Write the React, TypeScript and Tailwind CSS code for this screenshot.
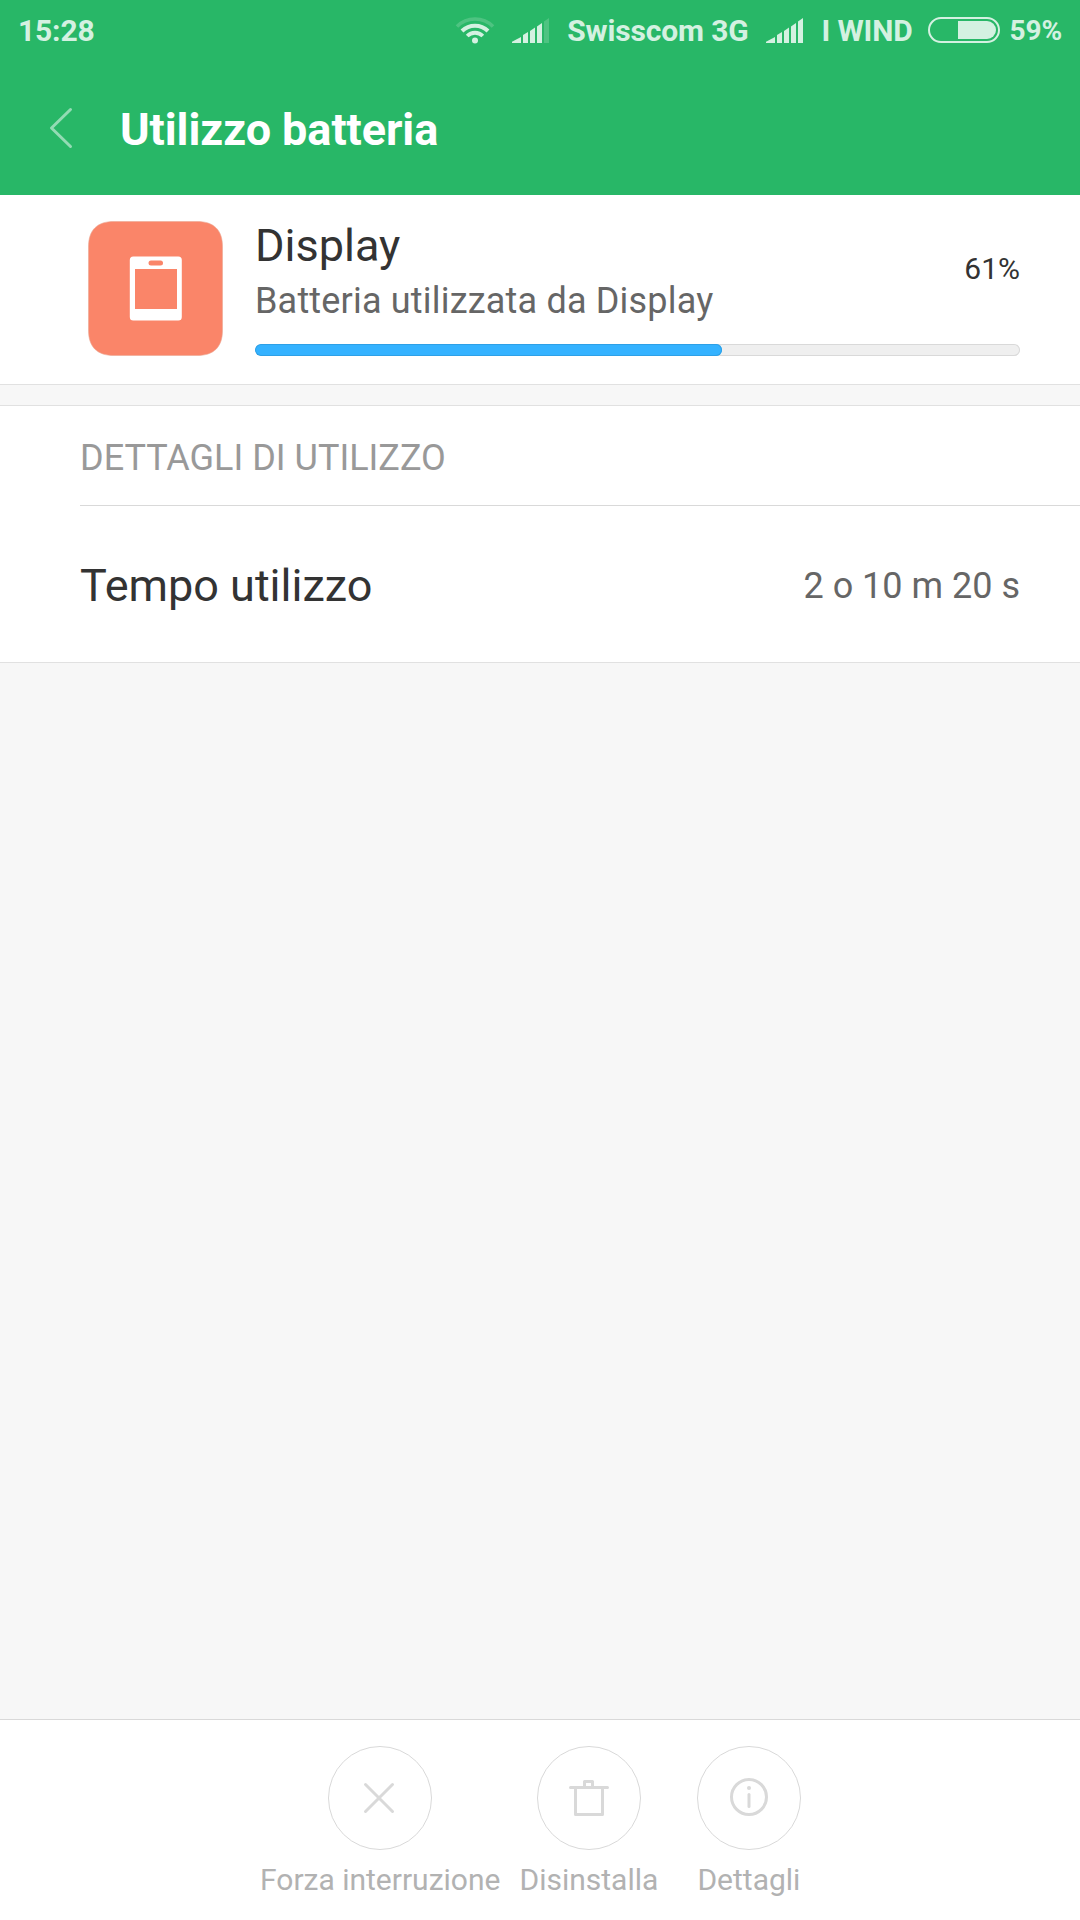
import { FC, ReactNode } from "react";

const usage = {
	name: "Display",
	summary: "Batteria utilizzata da Display",
	percent: 61
};

const details = [["Tempo utilizzo", "2 o 10 m 20 s"]];

const WifiIcon: FC = () => (
	<svg width={40} height={28} viewBox="0 0 40 28" fill="none" stroke="#d4f1e1" strokeWidth={4}>
		<path d="M2 9.5a25.5 25.5 0 0 1 36 0" strokeWidth={3.6} opacity={0.22} />
		<path d="M7 14a18.5 18.5 0 0 1 26 0" />
		<path d="M12.2 19a11 11 0 0 1 15.6 0" strokeWidth={3.8} />
		<circle cx={20} cy={23.5} r={3} fill="#d4f1e1" stroke="none" />
	</svg>
);

const SignalIcon: FC<{ full?: boolean }> = ({ full }) => (
	<svg width={38} height={26} viewBox="0 0 38 26" fill="#d4f1e1">
		<path d="M0 25v-1.2L9 19v6z" />
		<path d="M11 25v-8l5-3v11z" />
		<path d="M18 25V13l5-3.500V25z" />
		<path d="M25 25V8.500L30 5v20z" />
		<path d="M32 25V3.500L37 0v25z" opacity={full ? 1 : 0.22} />
	</svg>
);

const BatteryIcon: FC = () => (
	<svg width={72} height={26} viewBox="0 0 72 26" fill="none">
		<rect x={1} y={1} width={70} height={24} rx={12} stroke="#d4f1e1" strokeWidth={2} />
		<path d="M30 4h29a9 9 0 0 1 0 18H30z" fill="#d4f1e1" />
	</svg>
);

const StatusBar: FC = () => (
	<div className="flex h-[62px] items-center pr-[18px] pl-[18px] text-[30px] leading-none font-bold tracking-[-0.15px] text-[#d4f1e1]">
		<span className="grow">15:28</span>
		<WifiIcon />
		<div className="ml-[17px]">
			<SignalIcon />
		</div>
		<span className="ml-[17px]">Swisscom 3G</span>
		<div className="ml-[17px]">
			<SignalIcon full />
		</div>
		<span className="ml-[18px]">I WIND</span>
		<div className="mb-[2px] ml-[15px]">
			<BatteryIcon />
		</div>
		<span className="ml-[10px] text-[28px]">59%</span>
	</div>
);

const Header: FC = () => (
	<header className="h-[195px] bg-[#28b767]">
		<StatusBar />
		<div className="flex h-[135px] items-center pl-[49px]">
			<svg
				className="mb-[4px]"
				width={24}
				height={42}
				viewBox="0 0 24 42"
				fill="none"
				stroke="#93dbb4"
				strokeWidth={3}
				strokeLinecap="round"
				strokeLinejoin="round"
			>
				<path d="M21.500 2.500 2.500 21l19 18.500" />
			</svg>
			<h1 className="ml-[47px] text-[45px] leading-none font-bold tracking-[-0.06px] text-white">
				Utilizzo batteria
			</h1>
		</div>
	</header>
);

const DisplayIcon: FC = () => (
	<svg width={135} height={135} viewBox="0 0 135 135">
		<path
			d="M26 .5h83C126 .5 134.500 9 134.500 26v83c0 17-8.500 25.500-25.500 25.500H26C9 134.500.5 126 .5 109V26C.5 9 9 .5 26 .5z"
			fill="#fa8569"
			stroke="#eba893"
			strokeWidth={0.6}
		/>
		<rect x={41.800} y={35.500} width={52} height={64} rx={3.500} fill="#fff" />
		<rect x={47} y={48} width={42} height={40} fill="#fa8569" />
		<rect x={60.500} y={39.500} width={14.500} height={5} rx={2.500} fill="#fa8569" />
	</svg>
);

const UsageCard: FC = () => (
	<section className="flex h-[190px] border-b border-[#e1e1e1] bg-white pt-[26px] pr-[60px] pl-[88px]">
		<DisplayIcon />
		<div className="ml-[32px] grow">
			<div className="flex justify-between">
				<div>
					<h2 className="text-[45px] leading-[50px] text-[#333]">{usage.name}</h2>
					<p className="mt-[5px] text-[36px] leading-[50px] tracking-[0.19px] text-[#666]">
						{usage.summary}
					</p>
				</div>
				<span className="mt-[28px] text-[30px] leading-[40px] text-[#333]">{usage.percent}%</span>
			</div>
			<div className="mt-[18px] h-3 overflow-hidden rounded-full bg-[#efefef] inset-ring inset-ring-[#d9d9d9]">
				<div
					className="h-full rounded-full bg-[#34b2ff] inset-ring inset-ring-[#2ea0e6]"
					style={{ width: `${usage.percent}%` }}
				/>
			</div>
		</div>
	</section>
);

const DetailsList: FC = () => (
	<section className="mt-[20px] border-y border-[#e1e1e1] bg-white pl-[80px]">
		<h3 className="h-[100px] border-b border-[#d9d9d9] text-[36px] leading-[105px] text-[#999]">
			DETTAGLI DI UTILIZZO
		</h3>
		{details.map(([label, value]) => (
			<div key={label} className="flex h-[156px] items-center justify-between pt-[4px] pr-[60px]">
				<span className="text-[45px] text-[#333]">{label}</span>
				<span className="text-[36px] text-[#666]">{value}</span>
			</div>
		))}
	</section>
);

const Action: FC<{ label: string; children: ReactNode }> = ({ label, children }) => (
	<button className="flex min-w-[143px] flex-col items-center">
		<svg width={104} height={104} viewBox="0 0 104 104" fill="none" stroke="#d9d9d9">
			<circle cx={52} cy={52} r={51.500} />
			{children}
		</svg>
		<span className="mt-[10px] text-[30px] leading-[40px] text-[#b2b2b2]">{label}</span>
	</button>
);

const ActionBar: FC = () => (
	<footer className="flex h-[201px] gap-[17px] border-t border-[#d9d9d9] bg-white pt-[26px] pl-[260px]">
		<Action label="Forza interruzione">
			<path d="m37.500 38.500 27 27M64.500 38.500l-27 27" strokeWidth={3} strokeLinecap="round" />
		</Action>
		<Action label="Disinstalla">
			<g strokeWidth={3} strokeLinecap="round" strokeLinejoin="round">
				<path d="M33.500 41.500h37M38.500 42v26.500h27V42M47.500 41v-5.500h8V41" />
			</g>
		</Action>
		<Action label="Dettagli">
			<circle cx={52} cy={51} r={17.500} strokeWidth={3} />
			<circle cx={52} cy={42} r={2} fill="#d9d9d9" stroke="none" />
			<path d="M52 48.500v12" strokeWidth={3} strokeLinecap="round" />
		</Action>
	</footer>
);

export default function App() {
	return (
		<div className="flex h-[1920px] w-[1080px] flex-col bg-[#f7f7f7] font-['Roboto',sans-serif]">
			<Header />
			<UsageCard />
			<DetailsList />
			<div className="grow" />
			<ActionBar />
		</div>
	);
}
